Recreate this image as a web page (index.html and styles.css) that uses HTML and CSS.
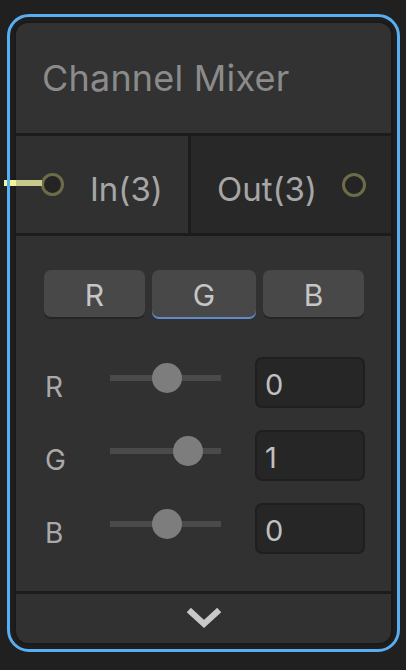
FILE: index.html
```html
<!DOCTYPE html>
<html>
<head>
<meta charset="utf-8">
<link rel="stylesheet" href="styles.css">
</head>
<body>
<div class="frame">
  <div class="node">
    <div class="title">Channel Mixer</div>
    <div class="ports">
      <div class="port port-in">
        <span class="wire"></span>
        <span class="dot"></span>
        <span class="port-label">In(3)</span>
      </div>
      <div class="port port-out">
        <span class="port-label">Out(3)</span>
        <span class="dot"></span>
      </div>
    </div>
    <div class="body">
      <div class="tabs">
        <div class="tab">R</div>
        <div class="tab active">G</div>
        <div class="tab">B</div>
      </div>
      <div class="rows">
        <div class="row">
          <span class="lbl">R</span>
          <div class="slider"><span class="thumb" style="left:42px"></span></div>
          <div class="field">0</div>
        </div>
        <div class="row">
          <span class="lbl">G</span>
          <div class="slider"><span class="thumb" style="left:63px"></span></div>
          <div class="field">1</div>
        </div>
        <div class="row">
          <span class="lbl">B</span>
          <div class="slider"><span class="thumb" style="left:42px"></span></div>
          <div class="field">0</div>
        </div>
      </div>
    </div>
    <div class="footer">
      <svg class="chev" width="34" height="22" viewBox="0 0 34 22">
        <polyline points="4,4 17,16 30,4" fill="none" stroke="#c9c9c9" stroke-width="6" stroke-linecap="square" stroke-linejoin="miter"/>
      </svg>
    </div>
  </div>
</div>
</body>
</html>
```

FILE: styles.css
```css
* { box-sizing: border-box; }
html, body { margin: 0; padding: 0; }
body {
  background: #202020;
  width: 406px;
  height: 670px;
  font-family: Inter, "Noto Sans", sans-serif;
  overflow: hidden;
}
.frame {
  position: relative;
  margin: 14px 0 0 7px;
  width: 393px;
  height: 638px;
  padding: 7px;
  border-radius: 22px;
  background: #1e1e1e;
}
.frame::after {
  content: "";
  position: absolute;
  inset: 0;
  border: 3px solid #58aef0;
  border-radius: 22px;
  pointer-events: none;
}
.node {
  height: 100%;
  background: #1c1c1c;
  border: 2px solid #1a1a1a;
  border-radius: 14px;
  display: flex;
  flex-direction: column;
  gap: 3px;
}
.title {
  height: 110px;
  flex: none;
  background: #323232;
  border-radius: 12px 12px 0 0;
  display: flex;
  align-items: center;
  padding: 0 0 0 26px;
  color: #8b8b8b;
  font-size: 36px;
  letter-spacing: 0.2px;
}
.ports {
  height: 97px;
  flex: none;
  display: flex;
  gap: 3px;
}
.port {
  position: relative;
  display: flex;
  align-items: center;
  font-size: 33px;
  color: #a6a6a6;
}
.port-in {
  width: 172px;
  background: #303030;
  padding-left: 25px;
  gap: 26px;
}
.port-out {
  flex: 1;
  background: #282828;
  padding: 0 25px 0 26px;
  justify-content: space-between;
}
.port-label { padding-top: 9px; }
.dot {
  width: 23px;
  height: 23px;
  border-radius: 50%;
  border: 3px solid #6c6c49;
  background: #242424;
  flex: none;
}
.port-out .dot { width: 24px; height: 24px; }
.wire {
  position: absolute;
  left: -12px;
  top: 44px;
  width: 38px;
  height: 6px;
  background: linear-gradient(to right, #f3f39c 0 12px, #c8c88d 12px);
}
.body {
  flex: 1;
  background: #313131;
  padding: 34px 26px 0 28px;
}
.tabs {
  display: grid;
  grid-template-columns: 101px 104px 101px;
  column-gap: 7px;
}
.tab {
  height: 47px;
  background: #484848;
  border-radius: 7px;
  box-shadow: 0 2px 0 #252525;
  color: #c6c6c6;
  font-size: 30px;
  display: flex;
  align-items: center;
  justify-content: center;
  padding-top: 2px;
}
.tab.active {
  box-shadow: 0 2px 0 #5f8acb;
}
.rows {
  margin-top: 40px;
  margin-left: 1px;
  display: flex;
  flex-direction: column;
  gap: 22px;
}
.row {
  display: grid;
  grid-template-columns: 65px 111px 1fr;
  align-items: center;
  height: 51px;
}
.lbl {
  color: #a9a9a9;
  font-size: 28px;
  margin-top: 8px;
}
.slider {
  position: relative;
  height: 30px;
  margin-bottom: 9px;
}
.slider::before {
  content: "";
  position: absolute;
  left: 0;
  right: 0;
  top: 12px;
  height: 6px;
  background: #4a4a4a;
}
.thumb {
  position: absolute;
  top: 0;
  width: 30px;
  height: 30px;
  border-radius: 50%;
  background: #7d7d7d;
}
.field {
  justify-self: end;
  width: 110px;
  height: 51px;
  background: #262626;
  border: 2px solid #1f1f1f;
  border-radius: 7px;
  color: #c0c0c0;
  font-size: 29px;
  display: flex;
  align-items: center;
  padding: 4px 0 0 8px;
}
.footer {
  height: 49px;
  flex: none;
  background: #313131;
  border-radius: 0 0 12px 12px;
  display: flex;
  align-items: center;
  justify-content: center;
}
.chev { display: block; }
```
